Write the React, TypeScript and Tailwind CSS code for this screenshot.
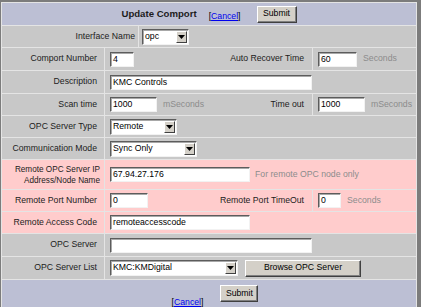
import React from "react";

const gray = "bg-[#c8c8c8]";
const pink = "bg-[#ffcccc]";

const Box = ({ value = "", className = "" }: { value?: string; className?: string }) => (
  <div
    className={
      "h-[15px] bg-white border border-t-[#5c5c5c] border-l-[#5c5c5c] border-r-[#f2f2f2] border-b-[#f2f2f2] shadow-[inset_1px_1px_0_#a8a8a8] pl-[2px] text-[8.7px] leading-[13px] text-black whitespace-nowrap overflow-hidden " +
      className
    }
  >
    {value}
  </div>
);

const Select = ({ value, className = "" }: { value: string; className?: string }) => (
  <div
    className={
      "h-[16px] bg-white border border-t-[#5c5c5c] border-l-[#5c5c5c] border-r-[#f2f2f2] border-b-[#f2f2f2] shadow-[inset_1px_1px_0_#a8a8a8] flex items-center justify-between pl-[2px] pr-[1px] text-[8.7px] text-black " +
      className
    }
  >
    <span>{value}</span>
    <span className="w-[11px] h-[12px] bg-[#d4d0c8] border border-t-white border-l-white border-r-[#404040] border-b-[#404040] flex items-center justify-center">
      <svg width="7" height="4" viewBox="0 0 7 4">
        <path d="M0 0h7L3.5 4z" fill="#000" />
      </svg>
    </span>
  </div>
);

const Button = ({ children, className = "" }: { children: React.ReactNode; className?: string }) => (
  <div
    className={
      "h-[17px] bg-[#d4d0c8] border border-t-white border-l-white border-r-[#404040] border-b-[#404040] shadow-[inset_-1px_-1px_0_#808080] flex items-center justify-center text-[8.7px] text-black " +
      className
    }
  >
    {children}
  </div>
);

const Label = ({
  children,
  bg = gray,
  className = "pr-[7px] text-[8.7px]",
}: {
  children: React.ReactNode;
  bg?: string;
  className?: string;
}) => (
  <div className={"flex items-center justify-end text-right text-[#1c1c1c] " + bg + " " + className}>
    {children}
  </div>
);

const Unit = ({ children }: { children: React.ReactNode }) => (
  <span className="ml-[6px] text-[8.7px] text-[#8c8c8c]">{children}</span>
);

const CancelLink = () => (
  <span className="text-[8.7px] text-black">
    [<span className="text-[#0000ee] underline">Cancel</span>]
  </span>
);

export default function App() {
  return (
    <div className="w-[421px] h-[307px] bg-[#7c7c7c] pt-[2px] pl-[1px] overflow-hidden font-['Liberation_Sans',Arial,sans-serif]">
      <div className="w-[416px] border border-[#e4e4e4] bg-[#e4e4e4] flex flex-col gap-px">
        {/* header */}
        <div className="h-[22px] bg-[#bcbfd4] flex items-center justify-center">
          <span className="text-[9.6px] font-bold text-[#1c1c1c]">Update Comport</span>
          <span className="ml-[12px]">
            <CancelLink />
          </span>
          <Button className="ml-[16px] w-[40px]">Submit</Button>
        </div>

        <div className="h-[21px] grid grid-cols-[136px_1fr] gap-px">
          <Label className="pr-[3px] text-[8.7px]">Interface Name</Label>
          <div className={gray + " flex items-center pl-[3px]"}>
            <Select value="opc" className="w-[47px]" />
          </div>
        </div>

        <div className="h-[22px] grid grid-cols-[102px_207px_1fr] gap-px">
          <Label>Comport Number</Label>
          <div className={gray + " flex items-center justify-between pl-[5px] pr-[8px]"}>
            <Box value="4" className="w-[24px]" />
            <span className="text-[8.7px] text-[#1c1c1c]">Auto Recover Time</span>
          </div>
          <div className={gray + " flex items-center pl-[5px]"}>
            <Box value="60" className="w-[39px]" />
            <Unit>Seconds</Unit>
          </div>
        </div>

        <div className="h-[22px] grid grid-cols-[102px_1fr] gap-px">
          <Label>Description</Label>
          <div className={gray + " flex items-center pl-[5px]"}>
            <Box value="KMC Controls" className="w-[202px]" />
          </div>
        </div>

        <div className="h-[21px] grid grid-cols-[102px_207px_1fr] gap-px">
          <Label>Scan time</Label>
          <div className={gray + " flex items-center pl-[5px] pr-[8px]"}>
            <Box value="1000" className="w-[47px]" />
            <Unit>mSeconds</Unit>
            <span className="ml-auto text-[8.7px] text-[#1c1c1c]">Time out</span>
          </div>
          <div className={gray + " flex items-center pl-[5px]"}>
            <Box value="1000" className="w-[47px]" />
            <Unit>mSeconds</Unit>
          </div>
        </div>

        <div className="h-[21px] grid grid-cols-[102px_1fr] gap-px">
          <Label>OPC Server Type</Label>
          <div className={gray + " flex items-center pl-[5px]"}>
            <Select value="Remote" className="w-[67px]" />
          </div>
        </div>

        <div className="h-[21px] grid grid-cols-[102px_1fr] gap-px">
          <Label>Communication Mode</Label>
          <div className={gray + " flex items-center pl-[5px]"}>
            <Select value="Sync Only" className="w-[87px]" />
          </div>
        </div>

        <div className="h-[29px] grid grid-cols-[102px_1fr] gap-px">
          <Label bg={pink} className="pr-[4px] leading-[11px] text-[8.2px]">
            Remote OPC Server IP
            <br />
            Address/Node Name
          </Label>
          <div className={pink + " flex items-center pl-[5px]"}>
            <Box value="67.94.27.176" className="w-[140px]" />
            <span className="ml-[5px] text-[8.7px] text-[#8c8c8c]">For remote OPC node only</span>
          </div>
        </div>

        <div className="h-[21px] grid grid-cols-[102px_207px_1fr] gap-px">
          <Label bg={pink}>Remote Port Number</Label>
          <div className={pink + " flex items-center justify-between pl-[5px] pr-[8px]"}>
            <Box value="0" className="w-[38px]" />
            <span className="text-[8.7px] text-[#1c1c1c]">Remote Port TimeOut</span>
          </div>
          <div className={pink + " flex items-center pl-[5px]"}>
            <Box value="0" className="w-[23px]" />
            <Unit>Seconds</Unit>
          </div>
        </div>

        <div className="h-[21px] grid grid-cols-[102px_1fr] gap-px">
          <Label bg={pink}>Remote Access Code</Label>
          <div className={pink + " flex items-center pl-[5px]"}>
            <Box value="remoteaccesscode" className="w-[140px]" />
          </div>
        </div>

        <div className="h-[22px] grid grid-cols-[102px_1fr] gap-px">
          <Label>OPC Server</Label>
          <div className={gray + " flex items-center pl-[5px]"}>
            <Box className="w-[202px]" />
          </div>
        </div>

        <div className="h-[22px] grid grid-cols-[102px_1fr] gap-px">
          <Label>OPC Server List</Label>
          <div className={gray + " flex items-center pl-[5px]"}>
            <Select value="KMC:KMDigital" className="w-[128px]" />
            <Button className="ml-[7px] w-[116px]">Browse OPC Server</Button>
          </div>
        </div>

        {/* footer */}
        <div className="h-[30px] bg-[#bcbfd4] flex items-start justify-center pt-[5px] pl-[12px]">
          <span className="mt-[3px]">
            <CancelLink />
          </span>
          <Button className="ml-[17px] w-[38px]">Submit</Button>
        </div>
      </div>
    </div>
  );
}
